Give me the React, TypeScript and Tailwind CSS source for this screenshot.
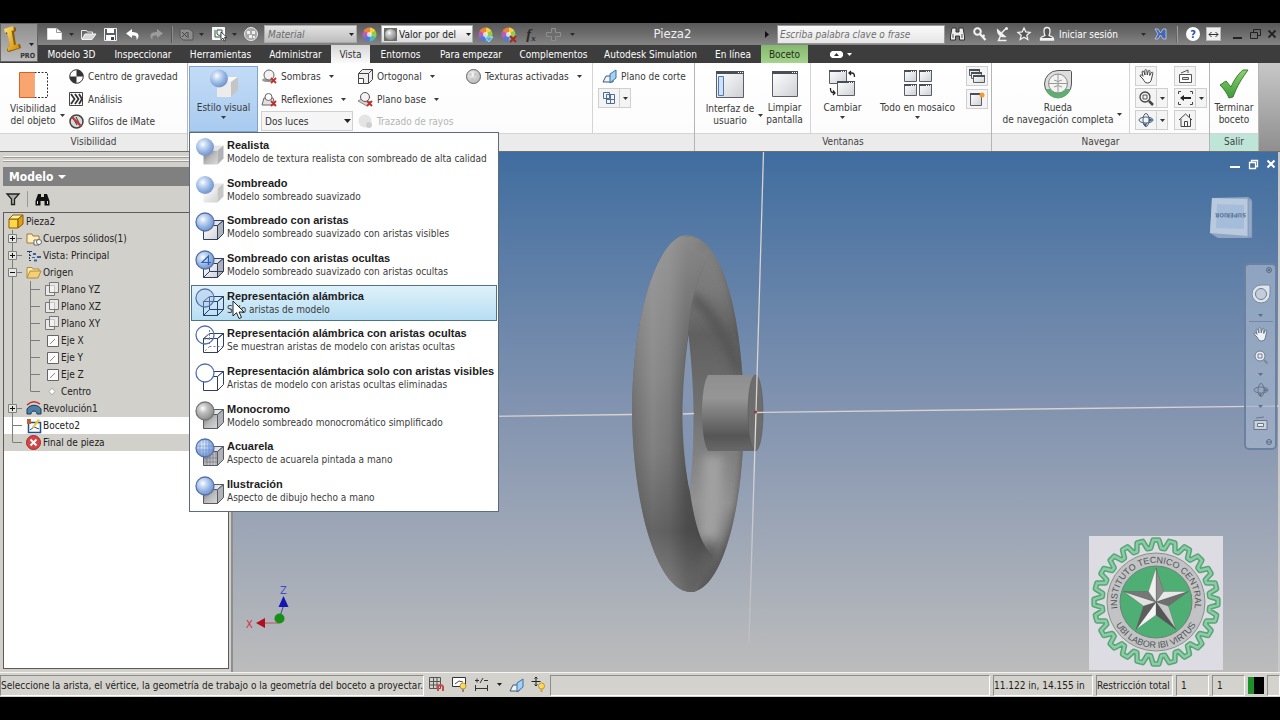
import { ReactNode } from "react";
import clsx from "clsx";

const FONT = "font-['DejaVu_Sans_Condensed','Noto_Sans',sans-serif]";

// Small down arrow used all over the ribbon
const Arrow = ({ className = "" }: { className?: string }) => (
  <svg className={clsx("shrink-0", className)} width="5" height="3" viewBox="0 0 5 3">
    <path d="M0 0h5L2.5 3z" fill="currentColor" />
  </svg>
);

const Pic = ({ w, h, children, className = "" }: { w: number; h: number; children: ReactNode; className?: string }) => (
  <svg className={clsx("shrink-0 overflow-visible", className)} width={w} height={h} viewBox={`0 0 ${w} ${h}`} fill="none">
    {children}
  </svg>
);

const SharedDefs = () => (
  <svg width="0" height="0" className="absolute" aria-hidden="true">
    <defs>
      <radialGradient id="ball" cx="0.38" cy="0.35" r="0.65">
        <stop offset="0" stopColor="#ffffff" />
        <stop offset="0.25" stopColor="#cfdff5" />
        <stop offset="0.7" stopColor="#8fb0e0" />
        <stop offset="1" stopColor="#7795cb" />
      </radialGradient>
      <radialGradient id="grayBall" cx="0.38" cy="0.35" r="0.65">
        <stop offset="0" stopColor="#ffffff" />
        <stop offset="0.4" stopColor="#c0c0c0" />
        <stop offset="1" stopColor="#8d8d8d" />
      </radialGradient>
      <linearGradient id="cubeLight" x1="0" y1="0" x2="1" y2="1">
        <stop offset="0" stopColor="#ffffff" />
        <stop offset="1" stopColor="#d2d2d2" />
      </linearGradient>
      <linearGradient id="cubeShadow" x1="0" y1="0" x2="1" y2="1">
        <stop offset="0" stopColor="#6b6b6b" />
        <stop offset="0.5" stopColor="#b9b9b9" />
        <stop offset="1" stopColor="#dadada" />
      </linearGradient>
      <linearGradient id="pane" x1="0" y1="0" x2="1" y2="1">
        <stop offset="0" stopColor="#ffffff" />
        <stop offset="1" stopColor="#cdd0d4" />
      </linearGradient>
      <linearGradient id="gold" x1="0" y1="0" x2="1" y2="1">
        <stop offset="0" stopColor="#ffe27a" />
        <stop offset="1" stopColor="#d08a00" />
      </linearGradient>
      <linearGradient id="tick" x1="0" y1="0" x2="0" y2="1">
        <stop offset="0" stopColor="#8ed16f" />
        <stop offset="1" stopColor="#3f9a38" />
      </linearGradient>
    </defs>
  </svg>
);

/* ---------- visual style icons ---------- */

type StyleKind =
  | "realistic" | "shaded" | "edges" | "hidden" | "wire"
  | "wireHidden" | "wireVisible" | "mono" | "water" | "illustration";

const StyleIcon = ({ kind }: { kind: StyleKind }) => {
  const wire = kind === "wire" || kind === "wireHidden" || kind === "wireVisible";
  const noEdges = kind === "realistic" || kind === "shaded";
  const gray = kind === "mono" || kind === "water" || kind === "illustration";
  const edge = noEdges ? "none" : gray ? "#555a66" : "#2b3f6b";
  const face = wire
    ? kind === "wireVisible" ? "#ffffff" : "none"
    : kind === "realistic" || gray ? "url(#cubeShadow)" : "url(#cubeLight)";
  const side = wire ? face : kind === "shaded" ? "#c6c6c6" : "#b0b2b6";
  const top = wire ? face : "#e4e4e4";
  const ball = kind === "mono" ? "url(#grayBall)" : kind === "wireVisible" ? "#ffffff" : wire ? "none" : "url(#ball)";
  const ballEdge = noEdges ? "none" : kind === "mono" ? "#777777" : "#5470ab";
  return (
    <Pic w={30} h={30}>
      <g stroke={edge} strokeLinejoin="round">
        <path d="M8.500 13.500h14v14h-14z" fill={face} />
        <path d="M8.500 13.500l6-5h14l-6 5z" fill={top} />
        <path d="M22.500 13.500l6-5v13l-6 6z" fill={side} />
        {(kind === "wire" || kind === "hidden") && <path d="M14.500 9v12.500M14.500 21.500h14M14.500 21.500l-6 6" />}
        {kind === "wireHidden" && (
          <path d="M14.500 9v12.500M14.500 21.500h14M14.500 21.500l-6 6" stroke="#7583a5" strokeDasharray="2 2" />
        )}
      </g>
      <circle cx="10" cy="10" r="9" fill={ball} stroke={ballEdge} strokeWidth="1.300" />
      {kind === "wire" && <circle cx="10" cy="10" r="8.500" fill="#9fb9e3" fillOpacity="0.35" />}
      {kind === "wireHidden" && <path d="M14.500 5v9M14 9l-5 5h6" stroke="#7583a5" strokeDasharray="2 1.500" />}
      {kind === "hidden" && <path d="M13.500 15V6L7 12.500h9" stroke="#2a63b5" strokeWidth="1.200" />}
      {kind === "water" && (
        <g stroke="#5f86c8" strokeWidth="0.800" opacity="0.7">
          <path d="M5 4v12M8 2v16M11 2v16M14 3v13M2 8h16M2 12h16" />
          <path d="M12 20v7M15 18v9M18 16v11M21 14v13M10 20h12M10 24h12" stroke="#5d6270" />
        </g>
      )}
    </Pic>
  );
};

const styles: { kind: StyleKind; title: string; text: string }[] = [
  { kind: "realistic", title: "Realista", text: "Modelo de textura realista con sombreado de alta calidad" },
  { kind: "shaded", title: "Sombreado", text: "Modelo sombreado suavizado" },
  { kind: "edges", title: "Sombreado con aristas", text: "Modelo sombreado suavizado con aristas visibles" },
  { kind: "hidden", title: "Sombreado con aristas ocultas", text: "Modelo sombreado suavizado con aristas ocultas" },
  { kind: "wire", title: "Representación alámbrica", text: "Sólo aristas de modelo" },
  { kind: "wireHidden", title: "Representación alámbrica con aristas ocultas", text: "Se muestran aristas de modelo con aristas ocultas" },
  { kind: "wireVisible", title: "Representación alámbrica solo con aristas visibles", text: "Aristas de modelo con aristas ocultas eliminadas" },
  { kind: "mono", title: "Monocromo", text: "Modelo sombreado monocromático simplificado" },
  { kind: "water", title: "Acuarela", text: "Aspecto de acuarela pintada a mano" },
  { kind: "illustration", title: "Ilustración", text: "Aspecto de dibujo hecho a mano" },
];

const StyleMenu = () => (
  <div className="absolute left-0 top-full z-20 flex h-[380px] w-[310px] flex-col justify-between border border-[#5d6b7c] bg-white px-px pb-[2px] pt-px">
    {styles.map((s) => (
      <button
        key={s.kind}
        type="button"
        className={clsx(
          "flex h-[36px] items-center border pl-[3px] text-left",
          s.kind === "wire"
            ? "border-[#4f7385] bg-linear-to-b from-[#dff1fa] to-[#b6def3]"
            : "border-transparent"
        )}>
        <StyleIcon kind={s.kind} />
        <span className="ml-[2px] flex flex-col whitespace-nowrap">
          <span className="font-['Liberation_Sans',sans-serif] text-[11px] font-bold leading-[14px] text-[#1c1c1c]">{s.title}</span>
          <span className="text-[10px] leading-[14px] text-[#3c3c3c]">{s.text}</span>
        </span>
      </button>
    ))}
    <svg className="absolute left-[42px] top-[167px]" width="13" height="20" viewBox="0 0 13 20">
      <path d="M1 1v15l3.500-3.300L7 18.500l2.500-1-2.400-5.500H12z" fill="#fff" stroke="#222" />
    </svg>
  </div>
);

/* ---------- title bar ---------- */

const Cell = ({ w, label, children }: { w: string; label: string; children: ReactNode }) => (
  <button type="button" aria-label={label} className={clsx("flex h-[21px] shrink-0 items-center justify-center text-[#2b2b2b]", w)}>
    {children}
  </button>
);

const ColorBall = ({ mark }: { mark?: "down" | "cross" }) => (
  <Pic w={15} h={15}>
    <path d="M7.500 7.500V.5a7 7 0 0 1 6 3.500z" fill="#f7d13d" />
    <path d="M7.500 7.500l6-3.500a7 7 0 0 1 0 7z" fill="#8fce4a" />
    <path d="M7.500 7.500l6 3.500a7 7 0 0 1-6 3.500z" fill="#49b6c9" />
    <path d="M7.500 7.500v7a7 7 0 0 1-6-3.500z" fill="#5577d8" />
    <path d="M7.500 7.500L1.500 11a7 7 0 0 1 0-7z" fill="#b45cc4" />
    <path d="M7.500 7.500L1.500 4a7 7 0 0 1 6-3.500z" fill="#f0813e" />
    <circle cx="7.500" cy="7.500" r="2.500" fill="#fff" fillOpacity="0.7" />
    {mark === "down" && <path d="M7 10h8l-4 5z" fill="#46b0ee" stroke="#e9f6ff" strokeWidth="0.600" />}
    {mark === "cross" && <path d="M9 9l6 6m0-6l-6 6" stroke="#b32222" strokeWidth="2" />}
  </Pic>
);

const QuickAccess = () => (
  <div className="flex items-center pl-1">
    <Cell w="w-[24px]" label="Nuevo">
      <Pic w={15} h={12}><path d="M.5.5h9l5 4v7H.5z" fill="#fff" stroke="#ddd" /><path d="M9.500.5v4h5" stroke="#999" /></Pic>
    </Cell>
    <Cell w="w-[10px]" label="Opciones de nuevo"><Arrow /></Cell>
    <Cell w="w-[24px]" label="Abrir">
      <Pic w={15} h={11}><path d="M.5 10V1.500h5l1 1.500h5v2" stroke="#e8e8e8" /><path d="M1 10.500L4 5h11l-4 5.500z" fill="#d7d7d7" stroke="#f5f5f5" /></Pic>
    </Cell>
    <Cell w="w-[20px]" label="Guardar">
      <Pic w={13} h={13}><path d="M.5.5h12v12H.5z" fill="#5a5f68" stroke="#f0f0f0" /><path d="M3 1h7v4H3zM2 7h9v5H2z" fill="#fff" /><path d="M7 9h3v3H7z" fill="#444" /></Pic>
    </Cell>
    <Cell w="w-[26px]" label="Deshacer">
      <Pic w={14} h={11}><path d="M6 0L0 4.500 6 9V6.500c4-.3 5 1 4.500 4.500 3.500-3.500 3-8-4.500-8z" fill="#fff" /></Pic>
    </Cell>
    <Cell w="w-[20px]" label="Rehacer">
      <Pic w={14} h={11}><path d="M8 0l6 4.500L8 9V6.500c-4-.3-5 1-4.500 4.500C0 7.500.5 3 8 3z" fill="#9c9c9c" /></Pic>
    </Cell>
    <span className="mx-[5px] h-[17px] w-[2px] border-l border-[#555] bg-[#8b8b8b]" />
    <Cell w="w-[16px]" label="Actualizar">
      <Pic w={15} h={13}><path d="M1 1h9l4 3v8H4L1 9z" fill="#8d8d8d" stroke="#555" /><path d="M3 4l5 5m0-5L3 9m6-5v6" stroke="#444" /></Pic>
    </Cell>
    <Cell w="w-[14px]" label="Opciones de actualizar"><Arrow /></Cell>
    <Cell w="w-[22px]" label="Seleccionar">
      <Pic w={15} h={14}><path d="M.5.5h12v12H.5z" fill="#f5f5f5" stroke="#fff" /><path d="M3 3v7h6M5 3h5v4a3 3 0 0 1-5 0z" stroke="#3c5a48" /><path d="M9 5v8l2-2 1 3 1.500-.5-1-3H15z" fill="#fff" stroke="#222" strokeWidth="0.800" /></Pic>
    </Cell>
    <Cell w="w-[8px]" label="Opciones de seleccionar"><Arrow /></Cell>
    <Cell w="w-[26px]" label="Material">
      <Pic w={14} h={14}><circle cx="7" cy="7" r="6.500" fill="#a8a8a8" stroke="#eaeaea" /><path d="M3 4h3v3H3zM8 4h3v3H8zM5 8h3v3H5zM9 9h2v2H9z" fill="#efefef" /></Pic>
    </Cell>
    <div className="relative flex w-[93px] items-center">
      <select aria-label="Material" className="h-[18px] w-full appearance-none border border-[#aaa] bg-linear-to-b from-[#e2e2e2] to-[#bdbdbd] pl-[3px] text-[10px] italic text-[#6b6b6b] outline-none">
        <option>Material</option>
      </select>
      <Arrow className="pointer-events-none absolute right-[3px] text-[#222]" />
    </div>
    <Cell w="w-[24px]" label="Ajustar apariencia"><ColorBall /></Cell>
    <div className="relative flex w-[92px] items-center">
      <select aria-label="Apariencia" className="h-[18px] w-full appearance-none border border-[#aaa] bg-linear-to-b from-white to-[#dcdcdc] pl-[17px] pr-[16px] text-[10px] text-[#222] outline-none">
        <option>Valor por del</option>
      </select>
      <Pic w={13} h={13} className="pointer-events-none absolute left-[3px]">
        <path d="M0 0h13v13H0z" fill="#6e6e6e" /><circle cx="6.500" cy="6.500" r="5.500" fill="url(#grayBall)" />
      </Pic>
      <Arrow className="pointer-events-none absolute right-[2px] text-[#222]" />
    </div>
    <Cell w="w-[24px]" label="Ajustar"><ColorBall mark="down" /></Cell>
    <Cell w="w-[22px]" label="Borrar"><ColorBall mark="cross" /></Cell>
    <Cell w="w-[24px]" label="Parámetros"><span className="font-['Liberation_Serif',serif] text-[15px] font-bold italic leading-none">f<sub className="text-[9px]">x</sub></span></Cell>
    <Cell w="w-[21px]" label="Añadir">
      <Pic w={15} h={13}><path d="M5.500.5h4v4h5v4h-5v4h-4v-4h-5v-4h5z" stroke="#8e8e8e" fill="#6d6d6d" /></Pic>
    </Cell>
    <Cell w="w-[16px]" label="Personalizar"><Arrow /></Cell>
  </div>
);

const TitleRight = () => (
  <div className="flex items-center">
    <span className="flex w-[12px] items-center"><Pic w={4} h={7}><path d="M0 0v7l4-3.500z" fill="#111" /></Pic></span>
    <input
      type="text"
      aria-label="Buscar"
      placeholder="Escriba palabra clave o frase"
      className="h-[19px] w-[168px] border border-[#999] bg-linear-to-b from-[#fafafa] to-[#e6e6e6] px-[2px] text-[10px] italic text-[#333] outline-none placeholder:text-[#6e6e6e]"
    />
    <Cell w="w-[24px]" label="Buscar ahora">
      <Pic w={15} h={14}><path d="M2 1h4v4h3V1h4l1.500 8v4h-5v-4h-4v4h-5V9z" fill="#ececec" stroke="#333" /><path d="M3 7v4m9-4v4" stroke="#555" /></Pic>
    </Cell>
    <Cell w="w-[22px]" label="Suscripción">
      <Pic w={14} h={14}><circle cx="4.500" cy="4.500" r="3.300" stroke="#f2f2f2" strokeWidth="2" /><path d="M7 7l5.500 6M9.500 10l2-2" stroke="#f2f2f2" strokeWidth="2.200" /></Pic>
    </Cell>
    <Cell w="w-[22px]" label="Comunicación">
      <Pic w={13} h={14}><path d="M1 1.500c-1 6 4 10 9.500 8.500z" fill="#f2f2f2" /><path d="M5.500 6L10 1.500M4.500 9l-2 4.500h8" stroke="#f2f2f2" strokeWidth="1.500" /><circle cx="10.500" cy="1.500" r="1.500" fill="#f2f2f2" /></Pic>
    </Cell>
    <Cell w="w-[22px]" label="Favoritos">
      <Pic w={14} h={14}><path d="M7 1l1.800 4 4.200.4-3.200 2.900 1 4.200L7 10.300l-3.800 2.200 1-4.200L1 5.400l4.200-.4z" fill="#555" stroke="#f5f5f5" strokeWidth="1.300" /></Pic>
    </Cell>
    <button type="button" className="flex items-center text-[10px] text-white">
      <span className="flex w-[24px] justify-center">
        <Pic w={14} h={14}><path d="M4 4a3 3.500 0 0 1 6 0c0 3-1 4-1 4.500 1 .8 4 .5 4.500 3V13H.5v-1.500C1 9 4 9.300 5 8.500 5 8 4 7 4 4z" fill="#555" stroke="#f2f2f2" strokeWidth="1.300" /><path d="M1 11h12v2H1z" fill="#f2f2f2" /></Pic>
      </span>
      <span className="w-[78px] whitespace-nowrap text-left">Iniciar sesión</span>
    </button>
    <Cell w="w-[12px]" label="Cuenta"><Arrow /></Cell>
    <Cell w="w-[22px]" label="Exchange">
      <Pic w={13} h={12}><path d="M1 1h3l2.500 4L9 1h3v10H9L6.500 7 4 11H1l3-5z" fill="#4467b5" stroke="#c2d0f0" strokeWidth="0.800" /></Pic>
    </Cell>
    <span className="mx-[5px] h-[17px] w-[2px] border-l border-[#666] bg-[#9d9d9d]" />
    <Cell w="w-[20px]" label="Ayuda">
      <span className="flex h-[14px] w-[14px] items-center justify-center rounded-full bg-white text-[11px] font-bold leading-none text-[#2c50b0]">?</span>
    </Cell>
    <Cell w="w-[20px]" label="Expandir">
      <span className="flex h-[14px] w-[15px] items-center justify-center border border-[#bbb] bg-[#efefef]">
        <Pic w={9} h={5}><path d="M0 2.500h9M2.500 0L0 2.500 2.500 5M6.500 0L9 2.500 6.500 5" stroke="#333" /></Pic>
      </span>
    </Cell>
    <Cell w="ml-[5px] w-[19px]" label="Minimizar"><Pic w={9} h={9}><path d="M0 7h9v2H0z" fill="#222" /></Pic></Cell>
    <Cell w="w-[16px]" label="Restaurar"><Pic w={11} h={10}><path d="M3.500 3V.5h7v6H8M.5 3.500h7v6h-7z" stroke="#222" /></Pic></Cell>
    <Cell w="w-[17px]" label="Cerrar"><Pic w={8} h={8}><path d="M.5.5l7 7m0-7l-7 7" stroke="#222" strokeWidth="1.800" /></Pic></Cell>
  </div>
);

const tabs = [
  { name: "Modelo 3D", cls: "w-[67px]" },
  { name: "Inspeccionar", cls: "w-[76px]" },
  { name: "Herramientas", cls: "w-[79px]" },
  { name: "Administrar", cls: "w-[71px]" },
  { name: "Vista", cls: "w-[39px] bg-linear-to-b from-[#d6d6d6] to-[#fafafa] text-[#333]" },
  { name: "Entornos", cls: "w-[61px]" },
  { name: "Para empezar", cls: "w-[80px]" },
  { name: "Complementos", cls: "w-[85px]" },
  { name: "Autodesk Simulation", cls: "w-[109px]" },
  { name: "En línea", cls: "w-[56px]" },
  { name: "Boceto", cls: "w-[47px] bg-linear-to-b from-[#85b86e] to-[#a5d48d] text-[#1f2f1a]" },
];

const Header = () => (
  <header className="flex bg-[#3d3d3d]">
    <button type="button" aria-label="Menú de aplicación" className="relative h-[39px] w-[38px] shrink-0 border border-[#666] bg-linear-to-b from-[#8f8f8f] to-[#bcbcbc]">
      <Pic w={36} h={36}>
        <path d="M4 5l9-3 2 1 0 3-2 1 2 13 4-1 1 4-12 4-2-1 0-4 3-1L7 9 5 9z" fill="#8a5c08" />
        <path d="M3 4l9-3 1 4-2.500 1 2.500 14 4-1 1 4-11 3-1-4 3-1L6 7 4 8z" fill="url(#gold)" />
      </Pic>
      <Arrow className="absolute right-[3px] top-[19px] text-[#222]" />
      <span className="absolute bottom-0 right-[2px] text-[7px] font-bold leading-[10px] text-[#333]">PRO</span>
    </button>
    <div className="flex min-w-0 flex-1 flex-col">
      <div className="flex h-[22px] items-center bg-linear-to-b from-[#585858] via-[#6d6d6d] to-[#858585]">
        <QuickAccess />
        <h1 className="flex-1 whitespace-nowrap text-center text-[13px] text-[#f0f0f0]">Pieza2</h1>
        <TitleRight />
      </div>
      <nav className="flex h-[18px] items-stretch bg-[#3d3d3d]">
        {tabs.map((t) => (
          <button key={t.name} type="button" className={clsx("shrink-0 whitespace-nowrap text-[10px] leading-[17px]", t.cls, !t.cls.includes("text-") && "text-white")}>
            {t.name}
          </button>
        ))}
        <button type="button" aria-label="Minimizar cinta" className="ml-[22px] flex items-center gap-[4px] text-white">
          <Pic w={13} h={7}><path d="M2 0h9l2 2v3l-2 2H2L0 5V2z" fill="#fff" /><path d="M4 5l2.500-3L9 5z" fill="#333" /></Pic>
          <Arrow />
        </button>
      </nav>
    </div>
  </header>
);

/* ---------- ribbon ---------- */

const Panel = ({ title, cls, labelCls = "bg-[#ebebeb]", children }: { title: string; cls: string; labelCls?: string; children?: ReactNode }) => (
  <section className={clsx("flex flex-col border-r border-[#b5b5b5] bg-linear-to-b from-white to-[#fbfbfb]", cls)}>
    <div className="flex h-[70px]">{children}</div>
    <h2 className={clsx("h-[18px] border-t border-[#d5d5d5] text-center text-[10px] leading-[16px] text-[#444]", labelCls)}>{title}</h2>
  </section>
);

const Row = ({ icon, label, arrow, disabled }: { icon: ReactNode; label: string; arrow?: boolean; disabled?: boolean }) => (
  <button type="button" disabled={disabled} className={clsx("flex h-[23px] items-center whitespace-nowrap text-[10px]", disabled ? "text-[#b5b5b5]" : "text-[#3a3a3a]")}>
    <span className="mr-[4px] flex w-[16px] justify-center">{icon}</span>
    {label}
    {arrow && <Arrow className="ml-[8px]" />}
  </button>
);

const Big = ({ icon, lines, cls, arrow }: { icon: ReactNode; lines: string[]; cls: string; arrow?: "below" | "side" }) => (
  <button type="button" className={clsx("relative flex h-full shrink-0 flex-col items-center text-[10px] leading-[12px] text-[#3a3a3a]", cls)}>
    <span className="flex h-[33px] items-center">{icon}</span>
    <span className="mt-[2px] flex items-center gap-[4px] whitespace-nowrap">
      <span>
        {lines.map((l) => (
          <span key={l} className="block">{l}</span>
        ))}
      </span>
      {arrow === "side" && <Arrow className="-mr-[9px]" />}
    </span>
    {arrow === "below" && <Arrow className="mt-[2px]" />}
  </button>
);

const Small = ({ label, split, children }: { label: string; split?: boolean; children: ReactNode }) => (
  <button type="button" aria-label={label} className="flex h-[20px] items-stretch border border-[#cfcfcf] bg-[#f4f4f4] text-[#333]">
    <span className="flex w-[20px] items-center justify-center">{children}</span>
    {split && <span className="flex w-[11px] items-center justify-center border-l border-[#cfcfcf]"><Arrow /></span>}
  </button>
);

const Sep = ({ cls = "" }: { cls?: string }) => <span className={clsx("w-px shrink-0 bg-[#d4d4d4]", cls)} />;

const Win = ({ x, y, w, h, side }: { x: number; y: number; w: number; h: number; side?: boolean }) => (
  <g>
    <path d={`M${x + 0.5} ${y + 0.5}h${w - 1}v${h - 1}h-${w - 1}z`} fill="url(#pane)" stroke="#5a5f67" />
    <path d={`M${x} ${y}h${w}v${w > 20 ? 3 : 2}h-${w}z`} fill="#4a4f57" />
    {w > 12 && <path d={`M${x + w - 6} ${y + 1.5}h1m1 0h1m1 0h1`} stroke="#fff" />}
    {side && <path d={`M${x + 2.5} ${y + 5.5}h5v${h - 8}h-5z`} fill="#cfe2fa" stroke="#4d79b5" />}
  </g>
);

const RedX = () => <path d="M9 9l5 5m0-5l-5 5" stroke="#c03030" strokeWidth="1.800" />;

const LookAt = () => (
  <Pic w={15} h={15}>
    <path d="M1.500 5.500h12v8h-12z" stroke="#555" fill="#fff" /><path d="M4.500 8.500h6v2h-6z" stroke="#555" fill="#ddd" /><path d="M3 4l7-3v3" stroke="#555" />
  </Pic>
);

const Orbit = ({ color = "#48607c" }: { color?: string }) => (
  <Pic w={16} h={14}>
    <ellipse cx="8" cy="7" rx="7" ry="3" stroke={color} /><ellipse cx="8" cy="7" rx="3" ry="6.500" stroke={color} />
    <path d="M11 5l4 2-4 2zM5 11l3 3 1-4z" fill={color} />
  </Pic>
);

const Hand = ({ fill = "#fff", stroke = "#444" }: { fill?: string; stroke?: string }) => (
  <Pic w={15} h={15}>
    <path d="M4 10L1 7c0-1.500 1.500-1.500 3 .3L3 3c.3-1.300 1.500-1.300 2 0l1 3-.2-4.500c.3-1.200 1.700-1.200 2 0L8.300 6l1-4c.5-1 1.700-.8 1.700.3L10.700 6.500l1.700-3c.8-.8 1.700-.2 1.400.8L12.500 10c-.5 2.500-1.500 4-4 4S5.500 12.500 4 10z" fill={fill} stroke={stroke} />
  </Pic>
);

const Lens = () => (
  <Pic w={15} h={15}>
    <circle cx="6" cy="6" r="5" fill="#f4f4f4" stroke="#444" strokeWidth="1.300" /><path d="M4 4h4v4H4z" stroke="#555" /><path d="M10 10l4 4" stroke="#444" strokeWidth="2.500" />
  </Pic>
);

const Ribbon = () => (
  <div className="flex h-[89px] border-b border-[#6f6f6f] bg-linear-to-b from-[#c8c8c8] to-[#8f8f8f]">
    <Panel title="Visibilidad" cls="w-[188px]">
      <Big
        cls="w-[66px] pt-[5px]"
        arrow="side"
        lines={["Visibilidad", "del objeto"]}
        icon={<Pic w={29} h={26}><path d="M.5.5h15v25H.5z" fill="#f9a56f" stroke="#d1622a" /><path d="M15.500.5h13v25h-13" fill="#fff" stroke="#333" strokeDasharray="2 1.500" /></Pic>}
      />
      <div className="flex flex-col pl-[2px] pt-[2px]">
        <Row label="Centro de gravedad" icon={<Pic w={15} h={15}><circle cx="7.500" cy="7.500" r="6.800" fill="#fff" stroke="#333" /><path d="M7.500 7.500H14.300A6.800 6.800 0 0 0 7.500.7zM7.500 7.500H.7a6.800 6.800 0 0 0 6.800 6.800z" fill="#333" /></Pic>} />
        <Row label="Análisis" icon={<Pic w={14} h={14}><path d="M.5.5h13v13H.5z" fill="#fff" stroke="#444" /><path d="M2 2l3.500 5L2 12M6 2l3.500 5L6 12M10 2l3 5-3 5" stroke="#333" strokeWidth="1.800" /></Pic>} />
        <Row label="Glifos de iMate" icon={<Pic w={15} h={15}><circle cx="7.500" cy="7.500" r="6.500" fill="#d9d9d9" stroke="#444" strokeWidth="1.500" /><path d="M4 4l4 7M7 3l4 8" stroke="#333" /><path d="M3 3l9 9" stroke="#c23a30" strokeWidth="2.200" /></Pic>} />
      </div>
    </Panel>
    <Panel title="" cls="w-[507px] pl-px">
      <div className="relative mt-[3px] h-[66px] w-[69px] shrink-0">
        <Big
          cls="w-full border border-[#7fa5cf] bg-linear-to-b from-[#c3dcf6] to-[#a9cbf0]"
          arrow="below"
          lines={["Estilo visual"]}
          icon={
            <Pic w={30} h={29}>
              <path d="M8 13h14v15H8z" fill="#ececec" /><path d="M8 13l7-5h14l-7 5z" fill="#f7f7f7" /><path d="M22 13l7-5v13l-7 7z" fill="#c5c5c5" />
              <circle cx="10" cy="9.500" r="9" fill="url(#ball)" />
            </Pic>
          }
        />
        <StyleMenu />
      </div>
      <div className="flex w-[99px] shrink-0 flex-col pl-[3px] pt-[2px]">
        <Row label="Sombras" arrow icon={<Pic w={15} h={15}><ellipse cx="6" cy="11" rx="6" ry="2" fill="#999" /><circle cx="7" cy="6" r="5" fill="#f2f2f2" stroke="#666" /><RedX /></Pic>} />
        <Row label="Reflexiones" arrow icon={<Pic w={15} h={15}><path d="M2 6h9l2 7H0z" fill="#e2e2e2" stroke="#666" /><circle cx="6.500" cy="5" r="3.500" fill="#fff" stroke="#666" /><RedX /></Pic>} />
        <div className="relative flex w-[92px] items-center">
          <select aria-label="Luces" className="h-[20px] w-full appearance-none border border-[#d0d0d0] bg-[#f5f5f5] pl-[3px] text-[10px] text-[#333] outline-none">
            <option>Dos luces</option>
          </select>
          <Pic w={7} h={4} className="pointer-events-none absolute right-[2px]"><path d="M0 0h7L3.500 4z" fill="#222" /></Pic>
        </div>
      </div>
      <div className="flex w-[107px] shrink-0 flex-col pt-[2px]">
        <Row label="Ortogonal" arrow icon={<Pic w={15} h={15}><path d="M.5 4.500h10v10H.5zM.5 4.500l4-4h10v10l-4 4M10.500 4.500l4-4" fill="#eee" stroke="#444" /><path d="M.5 9.500h5v5h-5z" fill="#fff" stroke="#444" /></Pic>} />
        <Row label="Plano base" arrow icon={<Pic w={15} h={15}><path d="M0 9l4-2 9 3-4 4z" fill="#d5d5d5" stroke="#888" /><circle cx="7" cy="5" r="4.500" fill="#f2f2f2" stroke="#555" /><RedX /></Pic>} />
        <Row label="Trazado de rayos" disabled icon={<Pic w={15} h={15}><circle cx="7" cy="7" r="6.500" fill="#e4e4e4" /><circle cx="11" cy="11" r="3" fill="#cfcfcf" /></Pic>} />
      </div>
      <div className="w-[128px] shrink-0 pl-px pt-[2px]">
        <Row label="Texturas activadas" arrow icon={<Pic w={15} h={15}><circle cx="7.500" cy="7.500" r="7" fill="url(#grayBall)" fillOpacity="0.6" stroke="#666" /><path d="M3 4h3v3H3zM8 4h3v3H8zM5 9h3v3H5z" fill="#bbb" fillOpacity="0.5" /></Pic>} />
      </div>
      <Sep />
      <div className="flex flex-col items-start pl-[8px] pt-[2px]">
        <Row label="Plano de corte" icon={<Pic w={15} h={13}><path d="M1 12l3-6h7v6z" fill="#eaf4ff" stroke="#456" /><path d="M8 4l6-4v8l-6 5z" fill="#a5d2f2" stroke="#3a6ea5" /></Pic>} />
        <div className="-ml-[3px]">
          <Small label="Corte" split><Pic w={12} h={12}><path d="M3.500 2.500h8v9h-8zM.5.5h6v6h-6zM7.500 3v8M4 7.500h7" stroke="#4d6d99" /></Pic></Small>
        </div>
      </div>
    </Panel>
    <Panel title="Ventanas" cls="w-[297px]">
      <Big cls="w-[70px] pt-[5px]" arrow="side" lines={["Interfaz de", "usuario"]} icon={<Pic w={28} h={27}><Win x={0} y={0} w={28} h={27} side /></Pic>} />
      <Big cls="w-[39px] pt-[4px]" lines={["Limpiar", "pantalla"]} icon={<Pic w={26} h={26}><Win x={0} y={0} w={26} h={26} /></Pic>} />
      <Sep cls="ml-[6px]" />
      <Big cls="w-[63px] pt-[4px]" arrow="below" lines={["Cambiar"]} icon={<Pic w={28} h={27}><Win x={0} y={0} w={18} h={14} /><Win x={8} y={11} w={18} h={15} /><path d="M20 3h3q2.500 0 2.500 4M22 1l-2 2 2 2M1.500 18q-.5 5 4 5M4 20.500L6 23l-2 2" stroke="#222" strokeWidth="1.300" /></Pic>} />
      <Big cls="w-[87px] pt-[4px]" arrow="below" lines={["Todo en mosaico"]} icon={<Pic w={28} h={27}><Win x={0} y={0} w={13} h={12} /><Win x={15} y={0} w={13} h={12} /><Win x={0} y={14} w={13} h={12} /><Win x={15} y={14} w={13} h={12} /></Pic>} />
      <div className="flex flex-col gap-[3px] pl-[5px] pt-[3px]">
        <Small label="Cascada"><Pic w={16} h={14}><Win x={0} y={0} w={11} h={7} /><Win x={2} y={3} w={11} h={7} /><Win x={4} y={6} w={12} h={8} /></Pic></Small>
        <Small label="Nueva ventana"><Pic w={14} h={14}><Win x={0} y={1} w={12} h={13} /><circle cx="12" cy="3" r="2.500" fill="#f39a2f" /></Pic></Small>
      </div>
    </Panel>
    <Panel title="Navegar" cls="w-[218px]">
      <Big
        cls="mr-[5px] w-[132px] pt-[4px]"
        arrow="side"
        lines={["Rueda", "de navegación completa"]}
        icon={
          <Pic w={28} h={28}>
            <path d="M14 .5h12.500l1 1V14a13.500 13.500 0 1 1-13.500-13.500z" fill="#ddd" stroke="#555" />
            <path d="M1.500 19a13 13 0 0 0 25 0z" fill="#5fae72" />
            <circle cx="14" cy="13.500" r="9.500" fill="#f0f3f0" stroke="#888" />
            <path d="M14 4v19M4.500 13.500h19M10 10q4 3 8 0M10 17q4-3 8 0" stroke="#999" />
          </Pic>
        }
      />
      <Sep />
      <div className="ml-[5px] grid grid-cols-[39px_auto] content-start justify-items-start gap-y-[2px] pt-[3px]">
        <Small label="Encuadre"><Hand /></Small>
        <Small label="Mirar a"><LookAt /></Small>
        <Small label="Zoom" split><Lens /></Small>
        <Small label="Anterior" split><Pic w={15} h={14}><path d="M.5 3V.5H3M12 .5h2.500V3M.5 11v2.500H3M12 13.500h2.500V11" stroke="#444" /><path d="M2 7l4-3v2h7v2H6v2z" fill="#222" /></Pic></Small>
        <Small label="Órbita" split><Orbit /></Small>
        <Small label="Inicio"><Pic w={15} h={14}><path d="M1 7l6.500-6L14 7M3 6v7.500h9.500V6M6.500 13.500V8.500h3v5M11.500 4V1" stroke="#444" /></Pic></Small>
      </div>
    </Panel>
    <Panel title="Salir" cls="w-[49px]" labelCls="bg-[#bfe5d8]">
      <Big
        cls="w-[48px] pt-[4px]"
        lines={["Terminar", "boceto"]}
        icon={<Pic w={30} h={30}><path d="M1 16l6-4 5 6C15 11 20 4 24 1l5 0C23 9 18 17 14 28l-4 1C8 24 5 20 1 16z" fill="url(#tick)" stroke="#3a7d34" /></Pic>}
      />
    </Panel>
  </div>
);

/* ---------- model browser ---------- */

type Link = "plus" | "minus" | "tee" | "end" | "line" | "none";

const Connector = ({ type }: { type: Link }) => (
  <Pic w={18} h={17}>
    {type !== "none" && <path d={`M8.500 0V${type === "end" ? 8 : 17}`} stroke="#7d7d7d" />}
    {type !== "none" && type !== "line" && <path d="M8.500 8.500H18" stroke="#7d7d7d" />}
    {(type === "plus" || type === "minus") && (
      <>
        <path d="M4.500 4.500h8v8h-8z" fill="#e6e6e2" stroke="#808080" />
        <path d={type === "plus" ? "M6 8.500h5M8.500 6v5" : "M6 8.500h5"} stroke="#111" />
      </>
    )}
  </Pic>
);

const Planes = () => <Pic w={16} h={15}><path d="M1.500 3.500h9v10h-9z" stroke="#777" fill="#e8e8e6" /><path d="M5.500.5h9v10h-9z" stroke="#777" fill="#f6f6f6" fillOpacity="0.6" /></Pic>;
const Axis = () => <Pic w={16} h={14}><path d="M3.500 1.500h11v11h-11z" fill="#fbfbfb" stroke="#666" /><path d="M6 10l5-5" stroke="#888" /></Pic>;

const tree: { label: string; links: Link[]; icon: ReactNode; active?: boolean }[] = [
  { label: "Cuerpos sólidos(1)", links: ["plus"], icon: <Pic w={16} h={14}><path d="M1 11V2h5l1 2h6v7z" fill="#ffeec0" stroke="#a8762c" /><path d="M8 8h5v5H8z" fill="#fff" stroke="#666" /><circle cx="13" cy="10" r="2.500" fill="#fff" stroke="#666" /></Pic> },
  { label: "Vista: Principal", links: ["plus"], icon: <Pic w={16} h={13}><path d="M3.500 2v10M1 2.500h5M3 6.500h3M3 11.500h2" stroke="#223c66" strokeDasharray="2 1" /><path d="M7 4h3v2H7zM6 8h3v1H6zM8 10.500h3v2H8zM11 7h4v2h-4z" fill="#3b639c" /></Pic> },
  { label: "Origen", links: ["minus"], icon: <Pic w={16} h={13}><path d="M1 12V1.500h5L7 3h6v2" fill="#ffe9a8" stroke="#b08a3a" /><path d="M1 12l3-7h11l-3 7z" fill="#f3d078" stroke="#b08a3a" /></Pic> },
  { label: "Plano YZ", links: ["line", "tee"], icon: <Planes /> },
  { label: "Plano XZ", links: ["line", "tee"], icon: <Planes /> },
  { label: "Plano XY", links: ["line", "tee"], icon: <Planes /> },
  { label: "Eje X", links: ["line", "tee"], icon: <Axis /> },
  { label: "Eje Y", links: ["line", "tee"], icon: <Axis /> },
  { label: "Eje Z", links: ["line", "tee"], icon: <Axis /> },
  { label: "Centro", links: ["line", "end"], icon: <Pic w={16} h={14}><path d="M8 3l3 3.500-3 3.500-3-3.500z" fill="#fff" stroke="#aaa" /></Pic> },
  { label: "Revolución1", links: ["plus"], icon: <Pic w={16} h={15}><path d="M1 13V8c3-5 11-5 14 0v5h-4c0-4-6-4-6 0z" fill="#4d7ea8" stroke="#1f3c57" /><path d="M1 4c4-4 9-4 13-1" stroke="#cc2a2a" strokeWidth="1.500" /></Pic> },
  { label: "Boceto2", links: ["tee"], active: true, icon: <Pic w={16} h={15}><path d="M2.500 4.500h12v10h-12z" fill="#fff" stroke="#1d4f91" strokeWidth="1.500" /><path d="M4 12l4-3 5 2" stroke="#1d4f91" /><path d="M6 9l6-8 2 1-6 8z" fill="#f2c638" /><path d="M1 1h4v5H1z" fill="#c65f2d" /></Pic> },
  { label: "Final de pieza", links: ["end"], icon: <Pic w={15} h={15}><circle cx="7.500" cy="7.500" r="7" fill="#d64545" stroke="#a52a2a" /><path d="M4.500 4.500l6 6m0-6l-6 6" stroke="#fff" strokeWidth="2" /></Pic> },
];

const Browser = () => (
  <aside className="flex w-[233px] shrink-0 flex-col border-r-2 border-[#8e8e8e] bg-[#d2d0cb] pb-[3px] pl-[3px] pr-[2px] pt-[4px]">
    <div className="mb-[5px] flex flex-col gap-[2px]">
      <span className="h-[2px] border-b border-[#9a9a96] bg-[#f4f4f2]" />
      <span className="h-[2px] border-b border-[#9a9a96] bg-[#f4f4f2]" />
    </div>
    <button type="button" className="flex h-[19px] items-center gap-[5px] bg-[#808080] pl-[6px] text-[12px] font-bold text-white">
      Modelo
      <Pic w={8} h={4}><path d="M0 0h8L4 4z" fill="#fff" /></Pic>
    </button>
    <div className="flex h-[26px] items-center pl-[3px]">
      <button type="button" aria-label="Filtro"><Pic w={14} h={12}><path d="M1 1h12L8.500 6v5.500h-3V6z" fill="#aaa" stroke="#222" strokeWidth="1.300" /></Pic></button>
      <span className="mx-[7px] h-[16px] w-px bg-[#9a9a96]" />
      <button type="button" aria-label="Buscar en el modelo"><Pic w={15} h={13}><path d="M3 1h3v3h3V1h3l2.500 7v4.500h-5V8h-4v4.500h-5V8z" fill="#111" /><path d="M2.500 8v3m10-3v3" stroke="#ddd" /></Pic></button>
    </div>
    <div className="flex-1 border border-[#5c5c5c] bg-white text-[10px] text-[#222]">
      <div className="flex h-[17px] items-center bg-[#d2d0cb] pl-[4px]">
        <Pic w={16} h={15} className="mr-[2px]"><path d="M1 5h9v9H1z" fill="#ffd84a" stroke="#8a5c00" /><path d="M1 5l4-4h10l-5 4z" fill="#fff0a0" stroke="#8a5c00" /><path d="M10 5l5-4v9l-5 4z" fill="#e0a010" stroke="#8a5c00" /></Pic>
        Pieza2
      </div>
      {tree.map((n) => (
        <div key={n.label} className={clsx("flex h-[17px] items-center whitespace-nowrap", n.active ? "bg-white" : "bg-[#d2d0cb]")}>
          {n.links.map((l, i) => (
            <Connector key={i} type={l} />
          ))}
          <span className="ml-[3px] mr-px flex w-[17px] justify-center">{n.icon}</span>
          {n.label}
        </div>
      ))}
    </div>
  </aside>
);

/* ---------- 3D viewport ---------- */

const TUBE = "M720 240C700 262 690 300 688 335C683 370 682 400 682 420C683 450 686 475 690 492C694 520 700 545 713 556C705 575 698 592 691 600H625V230z";

const Scene = () => (
  <svg className="absolute left-0 top-0 h-full w-full" viewBox="233 152 1045 520" preserveAspectRatio="xMidYMid slice" fill="none">
    <defs>
      <linearGradient id="tube" x1="632" y1="0" x2="700" y2="0" gradientUnits="userSpaceOnUse">
        <stop offset="0" stopColor="#6f6f6f" />
        <stop offset="0.3" stopColor="#898989" />
        <stop offset="0.55" stopColor="#7d7d7d" />
        <stop offset="0.8" stopColor="#585858" />
        <stop offset="1" stopColor="#505050" />
      </linearGradient>
      <linearGradient id="inner" x1="0" y1="235" x2="0" y2="592" gradientUnits="userSpaceOnUse">
        <stop offset="0" stopColor="#858585" />
        <stop offset="0.15" stopColor="#7a7a7a" />
        <stop offset="0.28" stopColor="#606060" />
        <stop offset="0.5" stopColor="#727272" />
        <stop offset="0.75" stopColor="#929292" />
        <stop offset="0.95" stopColor="#666666" />
      </linearGradient>
      <linearGradient id="topLight" x1="0" y1="235" x2="0" y2="592" gradientUnits="userSpaceOnUse">
        <stop offset="0" stopColor="#a0a0a0" stopOpacity="0.7" />
        <stop offset="0.4" stopColor="#a0a0a0" stopOpacity="0.15" />
        <stop offset="0.6" stopColor="#404040" stopOpacity="0.1" />
        <stop offset="0.83" stopColor="#404040" stopOpacity="0.5" />
        <stop offset="1" stopColor="#808080" stopOpacity="0.5" />
      </linearGradient>
      <linearGradient id="drum" x1="0" y1="375" x2="0" y2="451" gradientUnits="userSpaceOnUse">
        <stop offset="0" stopColor="#8e8e8e" />
        <stop offset="0.3" stopColor="#969696" />
        <stop offset="0.8" stopColor="#565656" />
        <stop offset="1" stopColor="#686868" />
      </linearGradient>
      <linearGradient id="fade" x1="0" y1="412" x2="0" y2="642" gradientUnits="userSpaceOnUse">
        <stop offset="0" stopColor="#e8e2df" />
        <stop offset="1" stopColor="#e8e2df" stopOpacity="0.2" />
      </linearGradient>
      <clipPath id="ring">
        <path d="M686 235C660 236 632 310 632 412C633 510 658 592 691 592C722 590 744 510 744 413C742 310 722 236 686 235z" />
      </clipPath>
      <filter id="soft" filterUnits="userSpaceOnUse" x="600" y="200" width="200" height="430"><feGaussianBlur stdDeviation="5" /></filter>
    </defs>
    <path d="M233 419.500L632 414.500" stroke="#d9d2cf" strokeWidth="1.300" />
    <g clipPath="url(#ring)">
      <path d="M625 230h130v370H625z" fill="url(#inner)" />
      <path d="M692 296C712 312 730 345 738 372" stroke="#525252" strokeWidth="8" filter="url(#soft)" />
      <path d="M718 235C744 290 752 360 750 420C750 500 734 560 704 592" stroke="#505050" strokeWidth="12" filter="url(#soft)" />
      <path d="M713 456C712 496 712 516 708 538" stroke="#a0a0a0" strokeWidth="20" filter="url(#soft)" />
      <path d="M706 548C714 566 708 580 694 594" stroke="#5a5a5a" strokeWidth="12" filter="url(#soft)" />
      <path d={TUBE} fill="url(#tube)" />
      <path d={TUBE} fill="url(#topLight)" />
      <path d="M700 240C716 244 722 250 728 262" stroke="#7c7c7c" strokeWidth="16" filter="url(#soft)" />
      <path d="M712 552C706 570 698 582 688 588" stroke="#606060" strokeWidth="10" filter="url(#soft)" />
    </g>
    <path d="M688.500 335C692 365 694 400 693.500 420C693.500 450 692 470 689.500 490C685 465 683 440 682.500 413C683 385 685 360 688.500 335z" fill="#8395b0" />
    <path d="M683 414L694 413.500" stroke="#d9d2cf" strokeWidth="1.300" />
    <path d="M708 375h48v76h-48c-8-12-8-64 0-76z" fill="url(#drum)" />
    <ellipse cx="755.500" cy="413" rx="7.500" ry="38" fill="#6d6d6d" stroke="#5a5a5a" strokeWidth="0.600" />
    <path d="M763.500 152L756 412" stroke="#d9d2cf" strokeWidth="1.300" />
    <path d="M756 412L749 642" stroke="url(#fade)" strokeWidth="1.300" />
    <path d="M756 412.500L1280 406" stroke="#d9d2cf" strokeWidth="1.300" />
    <circle cx="755.500" cy="412" r="1.500" fill="#a03038" />
    {/* axis triad */}
    <path d="M279 619L283.500 606" stroke="#4040b0" />
    <path d="M279 623H262" stroke="#c05060" />
    <path d="M278.500 607l5-11 5 11z" fill="#1515b0" />
    <path d="M256 623l9-5v10z" fill="#b01020" />
    <circle cx="279.500" cy="618.500" r="5" fill="#189018" />
    <text x="280" y="594" fontSize="11" fill="#4545cf">Z</text>
    <text x="246" y="628" fontSize="11" fill="#d03040">X</text>
  </svg>
);

const ViewCube = () => (
  <svg className="absolute right-[22px] top-[44px]" width="46" height="46" viewBox="0 0 46 46">
    <path d="M2 2l36-1 4 3v37l-3 1H8l-8-5z" fill="#8fa5c3" />
    <path d="M2 2l36 1v37L0 37z" fill="#b9c9de" />
    <path d="M38 3l4 2v37l-4-2z" fill="#95aac8" stroke="#7189aa" strokeWidth="0.600" />
    <path d="M7 8l27 1v24l-28-1z" fill="#a5bdda" />
    <text x="-36" y="-17" transform="rotate(180)" fontSize="6" fontWeight="bold" fill="#5d7697">SUPERIOR</text>
  </svg>
);

const NavBar = () => (
  <div className="absolute right-px top-[111px] flex h-[187px] w-[33px] flex-col items-center rounded-[5px] border-2 border-[#6b819f] bg-[#a3b3ca]/70 text-[#5d6f88]">
    <span className="mr-[3px] mt-[2px] self-end"><Pic w={6} h={6}><circle cx="3" cy="3" r="2.500" stroke="#5b6b82" /><path d="M1.500 1.500l3 3m0-3l-3 3" stroke="#5b6b82" /></Pic></span>
    <button type="button" aria-label="Rueda de navegación" className="mt-[11px]">
      <Pic w={20} h={20}><path d="M10 1h8l1 1v8a9 9 0 1 1-9-9z" fill="#dfe4ea" stroke="#7b8ba2" /><circle cx="10" cy="10" r="5.500" fill="#c4cedb" stroke="#6f7e93" /></Pic>
    </button>
    <Arrow className="mt-[10px]" />
    <span className="mt-[4px] h-px w-[24px] bg-[#7488a5]" />
    <button type="button" aria-label="Encuadre" className="mt-[5px]"><Hand fill="#eef1f5" stroke="#6a7789" /></button>
    <button type="button" aria-label="Zoom" className="mt-[8px]">
      <Pic w={14} h={14}><circle cx="6" cy="6" r="5" fill="#e9edf2" stroke="#6f7c8e" /><path d="M4 4h4v4H4z" stroke="#6f7c8e" /><path d="M10 10l3.500 3.500" stroke="#7f8896" strokeWidth="2.300" /></Pic>
    </button>
    <Arrow className="mt-[9px]" />
    <button type="button" aria-label="Órbita" className="mt-[7px]"><Orbit color="#66768c" /></button>
    <Arrow className="mt-[8px]" />
    <button type="button" aria-label="Mirar a" className="mt-[8px]">
      <Pic w={15} h={14}><path d="M1 4.500h13v9H1z" fill="#c9d1dc" stroke="#6a7789" /><path d="M4.500 7.500h6v3h-6z" fill="#e9edf2" stroke="#6a7789" /><path d="M3 2l8-1" stroke="#6a7789" /></Pic>
    </button>
    <span className="mr-[3px] mt-[9px] self-end"><Pic w={6} h={6}><circle cx="3" cy="3" r="2.500" stroke="#5b6b82" /><path d="M1 3h4" stroke="#5b6b82" /></Pic></span>
  </div>
);

const TEETH = 24;

const gearPath = () => {
  const pts: string[] = [];
  for (let i = 0; i < TEETH; i++) {
    [[-0.38, 54], [-0.18, 62], [0.18, 62], [0.38, 54]].forEach(([off, r]) => {
      const a = ((i + off) / TEETH) * Math.PI * 2 - Math.PI / 2;
      pts.push(`${(67 + r * Math.cos(a)).toFixed(1)} ${(66 + r * Math.sin(a)).toFixed(1)}`);
    });
  }
  return `M${pts.join("L")}z`;
};

const starPoint = (i: number, r: number) => {
  const a = (i / 10) * Math.PI * 2 - Math.PI / 2;
  return `${(67 + r * Math.cos(a)).toFixed(1)} ${(66 + r * Math.sin(a)).toFixed(1)}`;
};

const shades = ["#8b8b8b", "#e8e8e8", "#6f6f6f", "#c9c9c9", "#555555", "#f4f4f4", "#5d5d5d", "#e2e2e2", "#777777", "#f0f0f0"];

const Seal = () => (
  <svg className="absolute bottom-[2px] right-[55px]" width="134" height="134" viewBox="0 0 134 134" fill="none">
    <path d="M0 0h134v134H0z" fill="#dcdce2" />
    <path d={gearPath()} stroke="#54a675" strokeWidth="5.500" strokeLinejoin="round" />
    <path d={gearPath()} stroke="#8fcba6" strokeWidth="2.500" strokeLinejoin="round" />
    <circle cx="67" cy="66" r="49" fill="#c3c3c6" stroke="#8a8f8c" />
    <circle cx="67" cy="66" r="36" fill="#4fae74" stroke="#6c8275" />
    {shades.map((c, i) => (
      <path key={i} d={`M67 66L${starPoint(i, i % 2 ? 13 : 34)}L${starPoint(i + 1, i % 2 ? 34 : 13)}z`} fill={c} stroke="#555" strokeWidth="0.300" />
    ))}
    <path id="sealTop" d="M33.200 85.500A39 39 0 1 1 100.800 85.500" />
    <path id="sealBottom" d="M21 66A46 46 0 0 0 113 66" />
    <text fontSize="9" fill="#4e5552" className="font-['Liberation_Sans',sans-serif]">
      <textPath href="#sealTop" startOffset="50%" textAnchor="middle">INSTITUTO TECNICO CENTRAL</textPath>
    </text>
    <text fontSize="9" fill="#4e5552" className="font-['Liberation_Sans',sans-serif]">
      <textPath href="#sealBottom" startOffset="50%" textAnchor="middle">UBI LABOR IBI VIRTUS</textPath>
    </text>
  </svg>
);

const Viewport = () => (
  <main className="relative flex-1 overflow-hidden border-r-2 border-[#c9c9c9] bg-linear-to-b from-[#3f6d9f] via-[#8394b0] to-[#bcbcbc]">
    <Scene />
    <div className="absolute right-[3px] top-[7px] flex items-center gap-[9px]">
      <button type="button" aria-label="Minimizar vista"><Pic w={10} h={10}><path d="M0 7h10v2H0z" fill="#fff" /></Pic></button>
      <button type="button" aria-label="Restaurar vista"><Pic w={9} h={9}><path d="M2.500 2V.5h6v6H7M.5 2.500h6v6h-6z" stroke="#fff" strokeWidth="1.300" /></Pic></button>
      <button type="button" aria-label="Cerrar vista"><Pic w={8} h={8}><path d="M.5.5l7 7m0-7l-7 7" stroke="#fff" strokeWidth="2" /></Pic></button>
    </div>
    <ViewCube />
    <NavBar />
    <Seal />
  </main>
);

/* ---------- status bar ---------- */

const sunken = "h-[21px] shrink-0 whitespace-nowrap border border-b-white border-l-[#8c8c88] border-r-white border-t-[#8c8c88] leading-[20px]";

const StatusBar = () => (
  <footer className="flex h-[25px] items-end gap-[3px] border-t border-[#f3f3f1] bg-[#d4d2cd] pb-px text-[10px] text-[#1e1e1e]">
    <p className={clsx(sunken, "w-[424px]")}>Seleccione la arista, el vértice, la geometría de trabajo o la geometría del boceto a proyectar.</p>
    <div className="flex h-full w-[120px] items-center justify-between px-[2px]">
      <Pic w={16} h={15}><path d="M.5.5h11v11H.5zM4.500 1v10M8 1v10M1 4.500h10M1 8h10" stroke="#555" /><path d="M9 14V9.500q3-3 5 0V14" stroke="#d04545" strokeWidth="2" /></Pic>
      <Pic w={15} h={15}><path d="M.5.500h13v9H.5z" fill="#fff" stroke="#333" /><path d="M3 7l4-3 4 1" stroke="#444" /><circle cx="11" cy="9" r="3" fill="#ffd95a" stroke="#a97b10" strokeWidth="0.700" /><path d="M10 12h2v3h-2z" fill="#888" /></Pic>
      <Pic w={15} h={15}><path d="M1 3.500h4M3 1.500v4M6 6l3-5M10 3.500h4M1.500 8v6M13.500 8v6M2 11.500h11" stroke="#333" /></Pic>
      <Arrow />
      <Pic w={15} h={14}><path d="M1 13l3-6h6v6z" fill="#eaf4ff" stroke="#456" /><path d="M8 5l6-4v8l-6 5z" fill="#a5d2f2" stroke="#3a6ea5" /></Pic>
      <Pic w={14} h={15}><path d="M5 0v9M.5 4.500h9M3.500 1.500L5 0l1.500 1.500M3.500 7.500L5 9l1.500-1.500" stroke="#222" /><circle cx="10.500" cy="9" r="3" fill="#ffd95a" stroke="#a97b10" strokeWidth="0.700" /><path d="M9.500 12h2v3h-2z" fill="#c9a040" /></Pic>
    </div>
    <span className={clsx(sunken, "min-w-0 flex-1")} />
    <span className={clsx(sunken, "w-[100px]")}>11.122 in, 14.155 in</span>
    <span className={clsx(sunken, "w-[77px]")}>Restricción total</span>
    <span className={clsx(sunken, "w-[33px] pl-[4px]")}>1</span>
    <span className={clsx(sunken, "w-[33px] pl-[4px]")}>1</span>
    <span className="flex h-[21px] items-center"><span className="h-[17px] w-[16px] border-l-[6px] border-[#1f8f2a] bg-black" /></span>
    <span className={clsx(sunken, "w-[13px]")} />
  </footer>
);

export default function App() {
  return (
    <div className={clsx("flex min-h-screen w-full flex-col overflow-hidden bg-black py-[23px]", FONT)}>
      <SharedDefs />
      <Header />
      <Ribbon />
      <div className="flex flex-1">
        <Browser />
        <Viewport />
      </div>
      <StatusBar />
    </div>
  );
}
